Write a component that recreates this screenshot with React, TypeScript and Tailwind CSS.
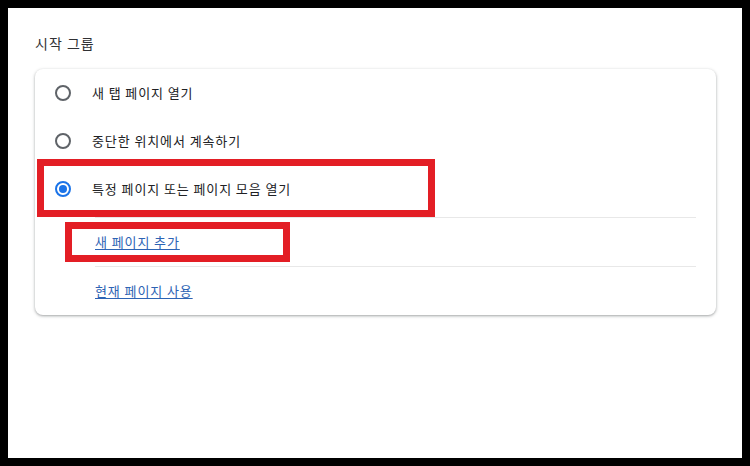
import React from 'react';

const font = { fontFamily: '"Noto Sans CJK KR", "Noto Sans", sans-serif' };

function Radio({ checked }: { checked?: boolean }) {
  return (
    <span
      className={
        checked
          ? 'w-4 h-4 rounded-full border-2 border-[#1a73e8] flex items-center justify-center flex-shrink-0'
          : 'w-4 h-4 rounded-full border-2 border-[#5f6368] flex-shrink-0'
      }
    >
      {checked && <span className="w-2 h-2 rounded-full bg-[#1a73e8]" />}
    </span>
  );
}

function RadioRow({ label, checked }: { label: string; checked?: boolean }) {
  return (
    <div className="h-[48px] flex items-center pl-[20px] gap-[21px]">
      <Radio checked={checked} />
      <span className="text-[13px] tracking-[0.9px] text-[#202124]">{label}</span>
    </div>
  );
}

function LinkRow({ label }: { label: string }) {
  return (
    <div className="ml-[60px] mr-[20px] h-[49px] border-t border-[#e8e8e8] flex items-center">
      <a href="#" className="text-[13px] tracking-[0.9px] text-[#2d63b4] underline underline-offset-2">
        {label}
      </a>
    </div>
  );
}

export default function App() {
  return (
    <div className="w-[750px] h-[466px] bg-black p-2 relative" style={font}>
      <div className="bg-white h-full pl-[27px] pr-[26px] pt-[25px]">
        <div className="text-[14px] leading-[20px] tracking-[1px] text-[#303134]">시작 그룹</div>
        <div className="mt-[16px] bg-white rounded-lg shadow-[0_1px_2px_rgba(60,64,67,0.3),0_1px_3px_1px_rgba(60,64,67,0.15)]">
          <RadioRow label="새 탭 페이지 열기" />
          <RadioRow label="중단한 위치에서 계속하기" />
          <RadioRow label="특정 페이지 또는 페이지 모음 열기" checked />
          <div className="h-[4px]" />
          <LinkRow label="새 페이지 추가" />
          <LinkRow label="현재 페이지 사용" />
        </div>
      </div>

      {/* red highlight boxes */}
      <div className="absolute left-[37px] top-[159px] w-[398px] h-[58px] border-[7px] border-[#e31e25]" />
      <div className="absolute left-[65px] top-[222px] w-[225px] h-[40px] border-[7px] border-[#e31e25]" />
    </div>
  );
}
